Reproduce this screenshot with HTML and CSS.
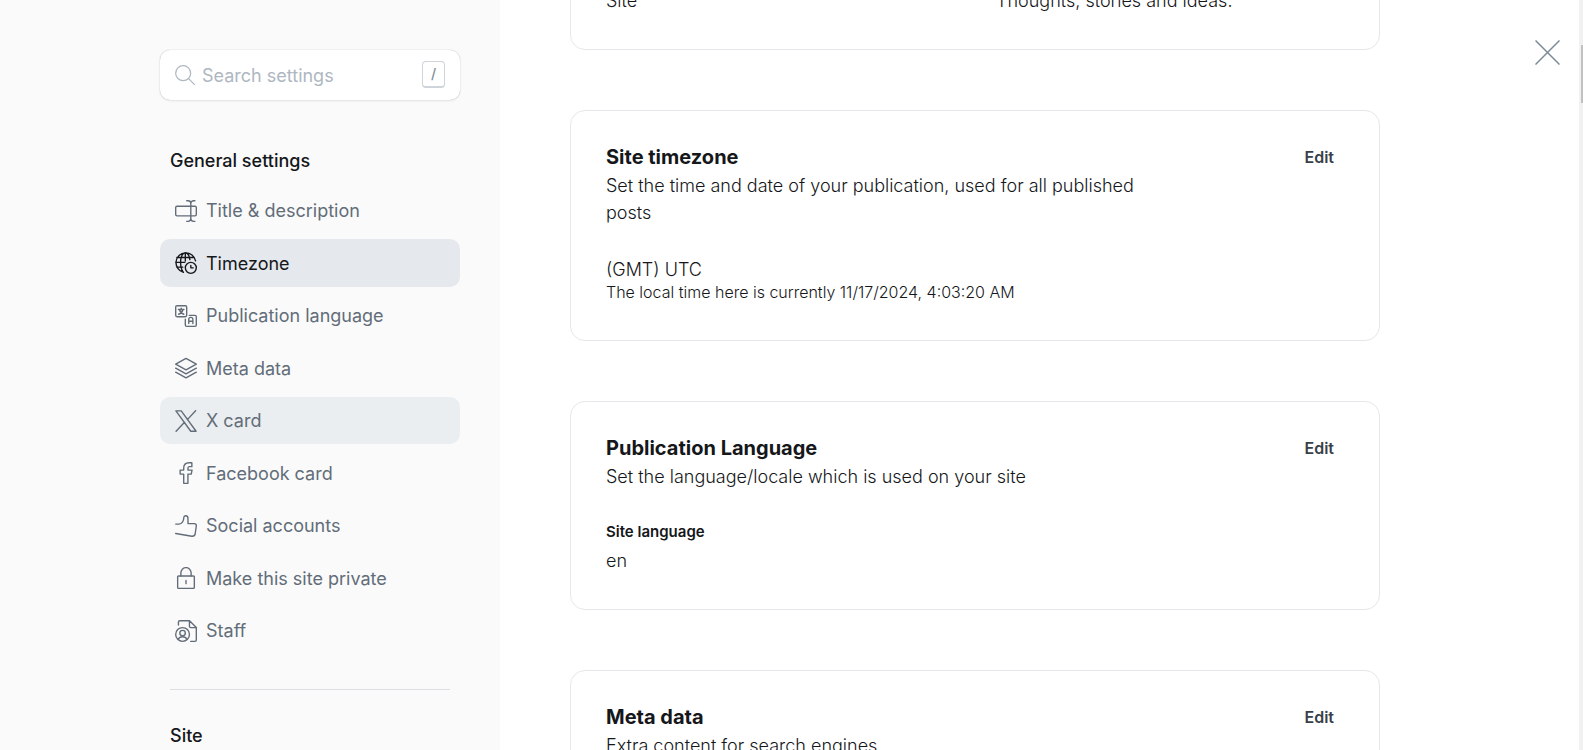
FILE: index.html
```
<!DOCTYPE html>
<html lang="en">
<head>
<meta charset="utf-8">
<title>Settings</title>
<link rel="stylesheet" href="styles.css">
</head>
<body>
<div class="app">
  <aside class="sidebar">
    <div class="sidebar-inner">
      <label class="search">
        <svg class="icon" viewBox="0 0 24 24" aria-hidden="true"><circle cx="9.8" cy="9.8" r="9"/><path d="M16.3 16.3 23.2 23.2"/></svg>
        <input class="search-input" type="text" placeholder="Search settings" aria-label="Search settings">
        <kbd class="search-key">/</kbd>
      </label>

      <h2 class="nav-heading">General settings</h2>
      <nav class="nav">
        <a class="nav-item" href="#title">
          <svg class="icon" viewBox="0 0 24 24" aria-hidden="true"><rect x=".75" y="6.75" width="22.5" height="10.5" rx="1.5"/><path d="M12.75.75h1.5a3 3 0 0 1 3 3v16.5a3 3 0 0 1-3 3h-1.5M21.75.75h-1.5a3 3 0 0 0-3 3M21.75 23.25h-1.5a3 3 0 0 1-3-3"/></svg>
          Title &amp; description</a>
        <a class="nav-item is-current" href="#timezone" aria-current="true">
          <svg class="icon" viewBox="0 0 24 24" aria-hidden="true"><circle cx="17.25" cy="17.25" r="6"/><path d="M17.25 14.6v2.65h2.65M9.2 22.1a10.75 10.75 0 1 1 13.2-12.5M9 21.9c-1.7-2-2.9-6-2.9-10.6C6.1 5.5 8.4.75 11.25.75c2.3 0 4.3 3.1 4.95 7.5M2 6h18.6M.75 11.25h10M2 16.5h6.5M11.25.75v9"/></svg>
          Timezone</a>
        <a class="nav-item" href="#language">
          <svg class="icon" viewBox="0 0 24 24" aria-hidden="true"><path d="M12.75 8.25v-6a1.5 1.5 0 0 0-1.5-1.5h-9a1.5 1.5 0 0 0-1.5 1.5v9a1.5 1.5 0 0 0 1.5 1.5h6M12.75 8.25v3a1.5 1.5 0 0 1-1.5 1.5h-3M11.25 15.5v6.25a1.5 1.5 0 0 0 1.5 1.5h9a1.5 1.5 0 0 0 1.5-1.5v-9a1.5 1.5 0 0 0-1.5-1.5h-6.25M15 20.25v-4.5a2.25 2.25 0 0 1 4.5 0v4.5M15 17.75h4.5M3.75 4.9h6M6.75 3.4v1.5M8.7 4.9c-.6 2.5-2.3 4.5-4.7 5.2M4.9 4.9c.6 2.5 2.2 4.5 4.7 5.2"/></svg>
          Publication language</a>
        <a class="nav-item" href="#metadata">
          <svg class="icon" viewBox="0 0 24 24" aria-hidden="true"><path d="M12 1.5 23.25 7.8 12 14 .75 7.8zM.75 12.2 12 18.4l11.25-6.2M.75 16.6 12 22.8l11.25-6.2"/></svg>
          Meta data</a>
        <a class="nav-item is-hover" href="#x-card">
          <svg class="icon" viewBox="0 0 24 24" aria-hidden="true"><path d="M1 .9h5.8L23 23.2h-5.8zM1.2 23.2l9.2-9.9M22.5.9l-9 9.6"/></svg>
          X card</a>
        <a class="nav-item" href="#facebook-card">
          <svg class="icon" viewBox="0 0 24 24" aria-hidden="true"><path d="M14.1 8.8V6.9a1.8 1.8 0 0 1 1.8-1.8h2.5V.75h-3.1c-3.7 0-5.8 2.2-5.8 5.8v2.25H5.6v4.4h3.9v10.05h4.6V13.2h3.6l.9-4.4z"/></svg>
          Facebook card</a>
        <a class="nav-item" href="#social">
          <svg class="icon" viewBox="0 0 24 24" aria-hidden="true"><path d="M.75 9.9h3.6c3.2 0 5.2-3.3 5.2-6.5 0-3.6 4.6-3.4 4.6.6v5.4h7a2.1 2.1 0 0 1 2.1 2.35l-1.2 8.6c-.25 1.85-1.8 3-3.7 2.85L.75 20.2"/></svg>
          Social accounts</a>
        <a class="nav-item" href="#private">
          <svg class="icon" viewBox="0 0 24 24" aria-hidden="true"><rect x="2.9" y="9.75" width="18.2" height="13.5" rx="1"/><path d="M6.4 9.75V6.3a5.6 5.6 0 0 1 11.2 0v3.45M12 14.6v3.6"/></svg>
          Make this site private</a>
        <a class="nav-item" href="#staff">
          <svg class="icon" viewBox="0 0 24 24" aria-hidden="true"><circle cx="8.25" cy="15.75" r="7.5"/><circle cx="8.25" cy="14.25" r="3"/><path d="M3.3 21.2c1-1.8 2.7-2.9 4.95-2.9s3.95 1.1 4.95 2.9M3.75 5.5V2.25a1.5 1.5 0 0 1 1.5-1.5h10.6l7.4 7.4v13.6a1.5 1.5 0 0 1-1.5 1.5H17M15.75.75v6a1.5 1.5 0 0 0 1.5 1.5h6"/></svg>
          Staff</a>
      </nav>
      <h2 class="nav-heading nav-heading-divided">Site</h2>
    </div>
  </aside>

  <main class="main">
    <div class="cards">
      <section class="card">
        <div class="columns">
          <p class="text">Site</p>
          <p class="text">Thoughts, stories and ideas.</p>
        </div>
      </section>

      <section class="card" id="timezone">
        <header class="card-header">
          <div class="card-intro">
            <h3 class="card-title">Site timezone</h3>
            <p class="text">Set the time and date of your publication, used for all published posts</p>
          </div>
          <button class="edit" type="button">Edit</button>
        </header>
        <p class="text">(GMT) UTC</p>
        <p class="hint">The local time here is currently 11/17/2024, 4:03:20 AM</p>
      </section>

      <section class="card" id="language">
        <header class="card-header">
          <div class="card-intro">
            <h3 class="card-title">Publication Language</h3>
            <p class="text">Set the language/locale which is used on your site</p>
          </div>
          <button class="edit" type="button">Edit</button>
        </header>
        <h4 class="field-label">Site language</h4>
        <p class="text">en</p>
      </section>

      <section class="card" id="metadata">
        <header class="card-header">
          <div class="card-intro">
            <h3 class="card-title">Meta data</h3>
            <p class="text">Extra content for search engines</p>
          </div>
          <button class="edit" type="button">Edit</button>
        </header>
      </section>
    </div>
    <button class="close" type="button" aria-label="Close">
      <svg class="close-icon" viewBox="0 0 25 25" aria-hidden="true"><path d="M.5.5l24 24M24.5.5l-24 24"/></svg>
    </button>
  </main>
  <div class="scroll-track"><div class="scroll-thumb"></div></div>
</div>
</body>
</html>
```

FILE: styles.css
```
* {
  box-sizing: border-box;
}

body {
  margin: 0;
  background: #fff;
  color: #15171a;
  font-family: Inter, "Liberation Sans", sans-serif;
  font-size: 18px;
  line-height: 27px;
}

h2, h3, h4, p {
  margin: 0;
}

.app {
  display: flex;
  height: 100vh;
  overflow: hidden;
}

.sidebar {
  flex: none;
  display: flex;
  justify-content: flex-end;
  width: 500px;
  padding: 50px 40px 0;
  background: #fafafa;
}

.sidebar-inner {
  width: 300px;
}

.icon {
  flex: none;
  width: 22px;
  height: 22px;
  fill: none;
  stroke: currentColor;
  stroke-width: 1.5;
  stroke-linecap: round;
  stroke-linejoin: round;
}

.search {
  display: flex;
  align-items: center;
  gap: 5px;
  height: 50px;
  padding: 0 15px;
  border-radius: 10px;
  background: #fff;
  color: #aeb7c1;
  box-shadow: 0 0 1px rgba(0, 0, 0, .32), 0 1px 3px rgba(0, 0, 0, .07);
}

.search .icon {
  width: 20px;
  height: 20px;
}

.search-input {
  flex: 1;
  min-width: 0;
  padding: 0 0 0 2px;
  border: 0;
  outline: 0;
  background: none;
  color: #15171a;
  font: inherit;
}

.search-input::placeholder {
  color: #aeb7c1;
}

.search-key {
  width: 23px;
  height: 27px;
  margin-bottom: 2px;
  border: 1px solid #ced4d9;
  border-bottom-width: 2px;
  border-radius: 4px;
  color: #7c8b9a;
  font: 500 14px/23px Inter, sans-serif;
  text-align: center;
}

.nav-heading {
  padding: 0 10px;
  font-size: 18px;
  font-weight: 500;
  line-height: 24px;
}

.search + .nav-heading {
  margin: 49px 0 14px;
}

.nav {
  display: grid;
  grid-auto-rows: 47px 48px;
  gap: 5px;
}

.nav-item {
  display: flex;
  align-items: center;
  gap: 9px;
  padding: 0 15px;
  border-radius: 10px;
  color: #626d79;
  text-decoration: none;
}

.nav-item.is-current {
  background: #e5e8ed;
  color: #15171a;
}

.nav-item.is-hover {
  background: #ebeef0;
}

.nav-heading-divided {
  margin: 35px 10px 0;
  padding: 34px 0 0;
  border-top: 1px solid #dddfe2;
}

.main {
  position: relative;
  flex: 1;
  min-width: 0;
  padding: 0 70px;
}

.cards {
  display: flex;
  flex-direction: column;
  gap: 60px;
  max-width: 810px;
  margin-top: -49px;
}

.card {
  padding: 35px;
  border: 1px solid #e6e7ea;
  border-radius: 15px;
}

.columns {
  display: grid;
  grid-template-columns: 1fr 1fr;
  gap: 42px;
}

.text {
  font-weight: 300;
}

.card-header {
  display: flex;
  justify-content: space-between;
  align-items: flex-start;
  margin-top: -1px;
  margin-bottom: 30px;
}

.card-intro {
  max-width: 560px;
}

.card-title {
  margin-bottom: 3px;
  font-size: 20px;
  font-weight: 700;
  line-height: 24px;
}

.edit {
  padding: 0 10px;
  border: 0;
  background: none;
  color: #394047;
  font: 600 16px/24px Inter, sans-serif;
}

.hint {
  margin-bottom: 3px;
  font-size: 16px;
  font-weight: 300;
  line-height: 19px;
}

.field-label {
  margin-bottom: 3px;
  font-size: 15px;
  font-weight: 600;
  line-height: 24px;
}

.close {
  position: absolute;
  top: 40px;
  right: 19px;
  padding: 0;
  border: 0;
  background: none;
  color: #7c8b9a;
  line-height: 0;
}

.close-icon {
  width: 25px;
  height: 25px;
  fill: none;
  stroke: currentColor;
  stroke-width: 1.5;
}

.scroll-track {
  flex: none;
  width: 4px;
  padding: 45px 0 0 2px;
  background: #f1f1f1;
}

.scroll-thumb {
  height: 58px;
  background: #c1c1c1;
}
```
